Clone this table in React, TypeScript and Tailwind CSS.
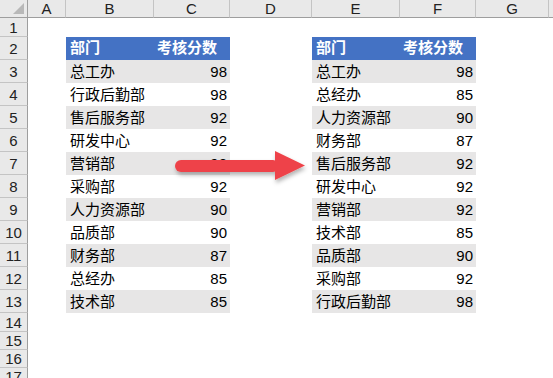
import React from 'react';

const columns = [
  { label: 'A', w: 'w-[38px]' },
  { label: 'B', w: 'w-[88px]' },
  { label: 'C', w: 'w-[76px]' },
  { label: 'D', w: 'w-[82px]' },
  { label: 'E', w: 'w-[88px]' },
  { label: 'F', w: 'w-[76px]' },
  { label: 'G', w: 'w-[73px]' },
  { label: '', w: 'w-[60px]' },
];

const before = [
  ['总工办', 98],
  ['行政后勤部', 98],
  ['售后服务部', 92],
  ['研发中心', 92],
  ['营销部', 92],
  ['采购部', 92],
  ['人力资源部', 90],
  ['品质部', 90],
  ['财务部', 87],
  ['总经办', 85],
  ['技术部', 85],
];

const after = [
  ['总工办', 98],
  ['总经办', 85],
  ['人力资源部', 90],
  ['财务部', 87],
  ['售后服务部', 92],
  ['研发中心', 92],
  ['营销部', 92],
  ['技术部', 85],
  ['品质部', 90],
  ['采购部', 92],
  ['行政后勤部', 98],
];

// 行高：第1行默认，2-13行是表格，后面又回到默认
const rowHeights: Record<number, string> = {
  1: 'h-[19px]',
  14: 'h-[19px]',
  15: 'h-[18px]',
  16: 'h-[18px]',
  17: 'h-[18px]',
};

function TableRow({ index, rows }: { index: number; rows: (string | number)[][] }) {
  if (index === 0) {
    return (
      <div className="flex w-[164px] h-full bg-[#4472c4] text-white font-bold">
        <div className="w-[88px] pl-[4px] flex items-center">部门</div>
        <div className="w-[76px] pr-[13px] flex items-center justify-end">考核分数</div>
      </div>
    );
  }
  const [name, score] = rows[index - 1];
  return (
    <div className={`flex w-[164px] h-full text-black ${index % 2 === 1 ? 'bg-[#e7e6e6]' : ''}`}>
      <div className="w-[88px] pl-[4px] flex items-center pt-[1px]">{name}</div>
      <div className="w-[76px] pr-[3px] flex items-center justify-end pt-[1px]">{score}</div>
    </div>
  );
}

export default function App() {
  const rowNums = Array.from({ length: 17 }, (_, i) => i + 1);

  return (
    <div
      className="relative w-[553px] h-[378px] overflow-hidden bg-white text-[15px]"
      style={{ fontFamily: '"Liberation Sans", "Noto Sans CJK SC", sans-serif' }}
    >
      {/* 列标题 */}
      <div className="flex h-[18px] bg-[#e9e9e9] text-[#222]">
        <div className="relative w-[28px] shrink-0 border-r border-b border-[#9e9e9e]">
          <div className="absolute right-[3px] bottom-[3px] w-0 h-0 border-l-[11px] border-l-transparent border-b-[11px] border-b-[#b8b8b8]" />
        </div>
        {columns.map((c, i) => (
          <div
            key={i}
            className={`${c.w} shrink-0 flex items-center justify-center leading-none border-b border-b-[#9e9e9e] border-r border-r-[#c4c4c4]`}
          >
            {c.label}
          </div>
        ))}
      </div>

      {rowNums.map((r) => (
        <div key={r} className={`flex ${rowHeights[r] ?? 'h-[23px]'}`}>
          <div className="w-[28px] shrink-0 bg-[#e9e9e9] text-[#222] flex items-center justify-center pt-[2px] border-r border-r-[#9e9e9e] border-b border-b-[#c4c4c4]">
            {r}
          </div>
          {r >= 2 && r <= 13 && (
            <>
              <div className="w-[38px] shrink-0" />
              <TableRow index={r - 2} rows={before} />
              <div className="w-[82px] shrink-0" />
              <TableRow index={r - 2} rows={after} />
            </>
          )}
        </div>
      ))}

      {/* 箭头 */}
      <svg
        className="absolute left-[168px] top-[146px]"
        width="146"
        height="44"
        viewBox="0 0 146 44"
      >
        <defs>
          <filter id="shadow" x="-10%" y="-30%" width="120%" height="170%">
            <feDropShadow dx="1" dy="3" stdDeviation="2" floodColor="#000" floodOpacity="0.3" />
          </filter>
        </defs>
        <g filter="url(#shadow)">
          <rect x="7" y="14" width="104" height="12" rx="6" fill="#ee4348" />
          <polygon points="107,5 137,19.5 107,34" fill="#ee4348" />
        </g>
      </svg>
    </div>
  );
}
